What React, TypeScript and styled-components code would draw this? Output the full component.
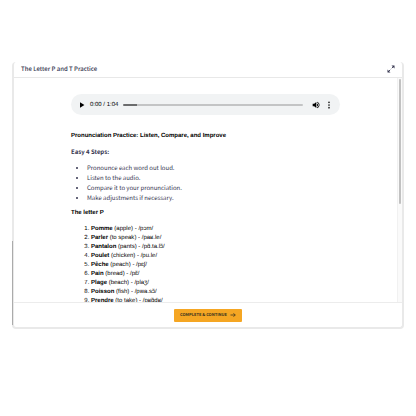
import React from "react";
import styled, { createGlobalStyle } from "styled-components";

const ui = `"Noto Sans CJK SC", "Noto Sans", sans-serif`;
const arial = `"Liberation Sans", Arial, sans-serif`;

const GlobalStyle = createGlobalStyle`
  * { box-sizing: border-box; }
  body { margin: 0; background: #fff; color: #35354f; font-family: ${ui}; font-size: 6px; text-rendering: geometricPrecision; }
  button { border: 0; padding: 0; background: none; cursor: pointer; color: inherit; text-rendering: inherit; }
`;

const Page = styled.main`
  padding: 62px 12px;
`;

const Dialog = styled.section`
  position: relative;
  background: #fff;
  border: 2px solid #e9e9e9;
  border-top: 0;
  border-radius: 4px;
`;

const EdgeShade = styled.span`
  position: absolute;
  left: -2px;
  bottom: 2px;
  width: 1px;
  height: 84px;
  background: #ababab;
`;

const Header = styled.header`
  display: flex;
  align-items: center;
  justify-content: space-between;
  height: 16px;
  padding: 0 7px 1px;
  border-bottom: 1px solid #e8e8e8;
`;

const Title = styled.h1`
  margin: 0;
  font-size: 6px;
  line-height: 12px;
  font-weight: 500;
`;

const IconButton = styled.button`
  display: flex;
  align-items: center;
  justify-content: center;
  flex: none;
  width: 8px;
  height: 8px;
`;

const Body = styled.div`
  display: flex;
  height: 224px;
`;

const Content = styled.article`
  flex: 1;
  min-width: 0;
  overflow: hidden;
  padding: 16px 57px 0;
  color: #000;
`;

const Track = styled.div`
  flex: none;
  width: 5px;
  padding: 1px 1px 0;
  background: #fafafa;
  border-left: 1px solid #f1f1f1;
`;

const Thumb = styled.div`
  height: 56%;
  border-radius: 2px;
  background: #c1c1c1;
`;

const Player = styled.div`
  display: flex;
  align-items: center;
  height: 21px;
  padding: 0 7px;
  border-radius: 11px;
  background: #f1f3f4;
  font-family: ${arial};
`;

const Time = styled.span`
  flex: none;
  margin: 0 5px 0 4px;
  font-size: 6px;
  line-height: 8px;
`;

const Seek = styled.input`
  appearance: none;
  flex: 1;
  min-width: 0;
  height: 8px;
  margin: 0 9px 0 0;
  background: transparent;
  &::-webkit-slider-runnable-track {
    height: 2px;
    border-radius: 1px;
    background: linear-gradient(to right, #6b6c6d 8%, #c3c4c5 8%);
  }
  &::-webkit-slider-thumb {
    appearance: none;
    width: 1px;
    height: 2px;
    background: transparent;
  }
`;

const MenuSlot = styled.span`
  margin-left: 5px;
`;

const Heading = styled.h2<{ $gap: number }>`
  margin: ${(p) => p.$gap}px 0 0;
  font-family: ${arial};
  font-size: 6px;
  line-height: 8px;
  font-weight: 700;
`;

const Label = styled.h3`
  margin: 8px 0 0;
  color: #35354f;
  font-size: 6px;
  line-height: 8px;
  font-weight: 700;
`;

const Steps = styled.ul`
  margin: 7px 0 0;
  padding-left: 16px;
  color: #35354f;
  font-size: 6px;
  line-height: 10px;
`;

const Words = styled.ol`
  margin: 8px 0 0;
  padding-left: 20px;
  font-family: ${arial};
  font-size: 6px;
  line-height: 9px;
`;

const Footer = styled.footer`
  display: flex;
  align-items: center;
  justify-content: center;
  height: 25px;
  border-top: 1px solid #ececec;
`;

const Complete = styled.button`
  && {
    display: flex;
    align-items: center;
    justify-content: center;
    gap: 3px;
    padding: 0 6px;
    height: 13px;
    border-radius: 1px;
    background: #f5a623;
    color: #35301f;
    font-family: ${ui};
    font-size: 4px;
    line-height: 8px;
    font-weight: 700;
    white-space: nowrap;
  }
`;

const steps = [
  "Pronounce each word out loud.",
  "Listen to the audio.",
  "Compare it to your pronunciation.",
  "Make adjustments if necessary.",
];

const words = [
  ["Pomme", "apple", "/pɔm/"],
  ["Parler", "to speak", "/paʁ.le/"],
  ["Pantalon", "pants", "/pɑ̃.ta.lɔ̃/"],
  ["Poulet", "chicken", "/pu.le/"],
  ["Pêche", "peach", "/pɛʃ/"],
  ["Pain", "bread", "/pɛ̃/"],
  ["Plage", "beach", "/plaʒ/"],
  ["Poisson", "fish", "/pwa.sɔ̃/"],
  ["Prendre", "to take", "/pʁɑ̃dʁ/"],
];

export default function App() {
  return (
    <>
      <GlobalStyle />
      <Page>
        <Dialog>
          <Header>
            <Title>The Letter P and T Practice</Title>
            <IconButton aria-label="Expand">
              <svg width="8" height="8" viewBox="0 0 16 16" fill="none" stroke="#35354f" strokeWidth="1.8">
                <path d="M9.5 6.5L13 3M6.5 9.5L3 13" />
                <path d="M9 1h6v6zM1 9v6h6z" fill="#35354f" stroke="none" />
              </svg>
            </IconButton>
          </Header>
          <Body>
            <Content>
              <Player>
                <IconButton aria-label="Play">
                  <svg width="8" height="8" viewBox="0 0 8 8">
                    <path d="M2 1.3v5.4L6.4 4z" fill="#000" />
                  </svg>
                </IconButton>
                <Time>0:00 / 1:04</Time>
                <Seek type="range" min="0" max="64" defaultValue="0" aria-label="Position" />
                <IconButton aria-label="Mute">
                  <svg width="8" height="8" viewBox="0 0 24 24" fill="#000">
                    <path d="M2 8.5v7h4.5L13 21V3L6.5 8.5zM15 7.5v9c1.9-.8 3-2.5 3-4.5s-1.1-3.7-3-4.5zM15 2.5v2.3c3.2.9 5.2 3.8 5.2 7.2s-2 6.3-5.2 7.2v2.3c4.4-1 7.5-4.9 7.5-9.5S19.4 3.5 15 2.5z" />
                  </svg>
                </IconButton>
                <MenuSlot>
                  <IconButton aria-label="More options">
                    <svg width="8" height="8" viewBox="0 0 24 24" fill="#222">
                      <circle cx="12" cy="4" r="2.6" />
                      <circle cx="12" cy="12" r="2.6" />
                      <circle cx="12" cy="20" r="2.6" />
                    </svg>
                  </IconButton>
                </MenuSlot>
              </Player>
              <Heading $gap={17}>Pronunciation Practice: Listen, Compare, and Improve</Heading>
              <Label>Easy 4 Steps:</Label>
              <Steps>
                {steps.map((s) => (
                  <li key={s}>{s}</li>
                ))}
              </Steps>
              <Heading $gap={6}>The letter P</Heading>
              <Words>
                {words.map(([fr, en, ipa]) => (
                  <li key={fr}>
                    <b>{fr}</b> ({en}) - {ipa}
                  </li>
                ))}
              </Words>
            </Content>
            <Track>
              <Thumb />
            </Track>
          </Body>
          <Footer>
            <Complete>
              COMPLETE &amp; CONTINUE
              <svg width="6" height="6" viewBox="0 0 12 12" fill="none" stroke="#35301f" strokeWidth="1.5">
                <path d="M1 6h9.5M7 2.5L10.5 6 7 9.5" />
              </svg>
            </Complete>
          </Footer>
          <EdgeShade />
        </Dialog>
      </Page>
    </>
  );
}
